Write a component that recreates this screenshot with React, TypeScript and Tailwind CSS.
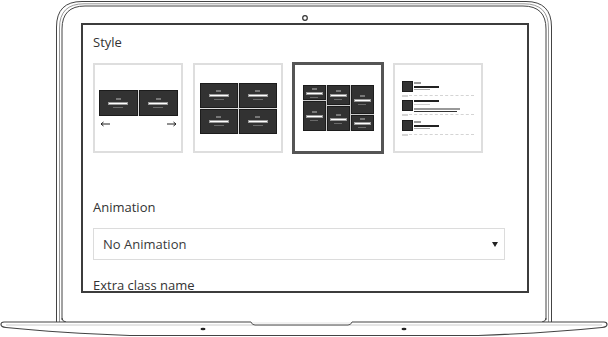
import React from 'react'

const font = { fontFamily: '"Open Sans", "Liberation Sans", sans-serif' }

function Tile({ w, h, bar = 20 }: { w: number; h: number; bar?: number }) {
  return (
    <div
      className="flex flex-col items-center justify-center gap-[2px] border border-[#1c1c1c] bg-[#323232]"
      style={{ width: w, height: h }}
    >
      <div className="h-[2px] w-[5px] bg-[#777]" />
      <div className="h-[3px] border border-[#999] bg-white" style={{ width: bar }} />
      <div className="h-px bg-[#6a6a6a]" style={{ width: bar / 2 }} />
    </div>
  )
}

function Arrow({ dir }: { dir: 'left' | 'right' }) {
  return (
    <svg width="10" height="6" viewBox="0 0 10 6">
      {dir === 'left' ? (
        <path d="M1 3 H10 M1 3 L3.5 1 M1 3 L3.5 5" stroke="#222" strokeWidth="1" fill="none" />
      ) : (
        <path d="M0 3 H9 M9 3 L6.5 1 M9 3 L6.5 5" stroke="#222" strokeWidth="1" fill="none" />
      )}
    </svg>
  )
}

function Separator() {
  return (
    <div className="flex items-center gap-[1px]">
      <div className="h-[2px] w-[6px] bg-[#d4d4d4]" />
      <div className="h-px w-[65px] border-t border-dashed border-[#d4d4d4]" />
    </div>
  )
}

function ListRow({ long }: { long?: boolean }) {
  return (
    <div className="flex gap-[1px]">
      <div className="h-[11px] w-[11px] border border-[#1c1c1c] bg-[#333]" />
      {long ? (
        <div className="flex flex-col">
          <div className="h-[2px] w-[25px] bg-[#222]" />
          <div className="mt-[2px] h-px w-[16px] bg-[#ccc]" />
          <div className="mt-[3px] h-[2px] w-[46px] bg-[#999]" />
          <div className="mt-[1px] h-px w-[43px] bg-[#333]" />
        </div>
      ) : (
        <div className="flex flex-col pt-px">
          <div className="h-[2px] w-[7px] bg-[#999]" />
          <div className="mt-[2px] h-[2px] w-[25px] bg-[#222]" />
          <div className="mt-[1px] h-px w-[16px] bg-[#aaa]" />
        </div>
      )}
    </div>
  )
}

const boxBase = 'flex h-[90px] w-[90px] shrink-0 items-center justify-center bg-white'

function LaptopFrame() {
  return (
    <svg className="absolute inset-0" width="608" height="337" viewBox="0 0 608 337">
      {/* lid */}
      <path d="M56.5 322 V27 Q56.5 1.5 82 1.5 H526 Q551.5 1.5 551.5 27 V322" fill="none" stroke="#444" />
      <path d="M59.5 322 V28 Q59.5 3.8 84 3.8 H524 Q548.5 3.8 548.5 28 V322" fill="none" stroke="#999" />
      <path d="M62 320 V29 Q62 6 85 6 H523 Q546 6 546 29 V320" fill="none" stroke="#444" />
      <path d="M62 318 Q62 321.5 66 322 M546 318 Q546 321.5 542 322" fill="none" stroke="#444" />
      {/* camera */}
      <circle cx="305" cy="18" r="2.3" fill="#fff" stroke="#333" strokeWidth="1.2" />
      {/* base */}
      <path
        d="M251 322 H4 Q1 322 1 324.5 Q1 327 6 327.5 Q60 333 130 335.5 H478 Q548 333 602 327.5 Q607 327 607 324.5 Q607 322 604 322 H352"
        fill="#fff"
        stroke="#444"
        strokeWidth="1.2"
      />
      <path d="M6 325 H602" stroke="#ccc" strokeWidth="1" />
      <path d="M251 322 Q252 325 255 325 H348 Q351 325 352 322" fill="#f2f2f2" stroke="#555" strokeWidth="1" />
      <ellipse cx="203" cy="329" rx="2.5" ry="1.2" fill="#222" />
      <ellipse cx="404" cy="329" rx="2.5" ry="1.2" fill="#222" />
    </svg>
  )
}

export default function App() {
  return (
    <div className="relative h-[337px] w-[608px] overflow-hidden bg-white pl-[81px] pt-[23px]" style={font}>
      <LaptopFrame />
      <div className="relative h-[270px] w-[448px] overflow-hidden border-2 border-[#3c3c3c] bg-white pl-[10px] pt-[8px] text-[13px] leading-[18px] text-[#333]">
        <div>Style</div>

        <div className="mt-[12px] flex gap-[10px]">
          {/* slider */}
          <div className={`${boxBase} border-2 border-[#dedede]`}>
            <div className="flex flex-col items-stretch">
              <div className="flex gap-px bg-[#ddd]">
                <Tile w={39} h={26} />
                <Tile w={39} h={26} />
              </div>
              <div className="mt-[5px] flex justify-between px-px">
                <Arrow dir="left" />
                <Arrow dir="right" />
              </div>
            </div>
          </div>

          {/* grid */}
          <div className={`${boxBase} border-2 border-[#dedede]`}>
            <div className="grid grid-cols-2 gap-[1px] bg-[#ddd]">
              <Tile w={38} h={25} />
              <Tile w={38} h={25} />
              <Tile w={38} h={25} />
              <Tile w={38} h={25} />
            </div>
          </div>

          {/* masonry (selected) */}
          <div className={`${boxBase} -ml-px -mt-px h-[92px] w-[92px] border-[3px] border-[#555]`}>
            <div className="flex gap-px bg-[#ccc]">
              <div className="flex flex-col gap-px">
                <Tile w={23} h={15} bar={17} />
                <Tile w={23} h={30} bar={17} />
              </div>
              <div className="flex flex-col gap-px">
                <Tile w={23} h={20} bar={17} />
                <Tile w={23} h={25} bar={17} />
              </div>
              <div className="flex flex-col gap-px">
                <Tile w={23} h={29} bar={17} />
                <Tile w={23} h={16} bar={17} />
              </div>
            </div>
          </div>

          {/* list */}
          <div className={`${boxBase} -ml-px border-2 border-[#dedede]`}>
            <div className="flex flex-col">
              <ListRow />
              <div className="mt-[3px]"><Separator /></div>
              <div className="mt-[3px]"><ListRow long /></div>
              <div className="mt-[2px]"><Separator /></div>
              <div className="mt-[4px]"><ListRow /></div>
              <div className="mt-[3px]"><Separator /></div>
            </div>
          </div>
        </div>

        <div className="mt-[44px]">Animation</div>

        <div className="mt-[12px] flex h-[32px] w-[412px] items-center justify-between border border-[#dcdcdc] pl-[9px] pr-[6px] text-[#3a3a3a]">
          <span>No Animation</span>
          <svg width="6" height="5" viewBox="0 0 6 5">
            <polygon points="0,0 6,0 3,5" fill="#222" />
          </svg>
        </div>

        <div className="mt-[16px]">Extra class name</div>
      </div>
    </div>
  )
}
